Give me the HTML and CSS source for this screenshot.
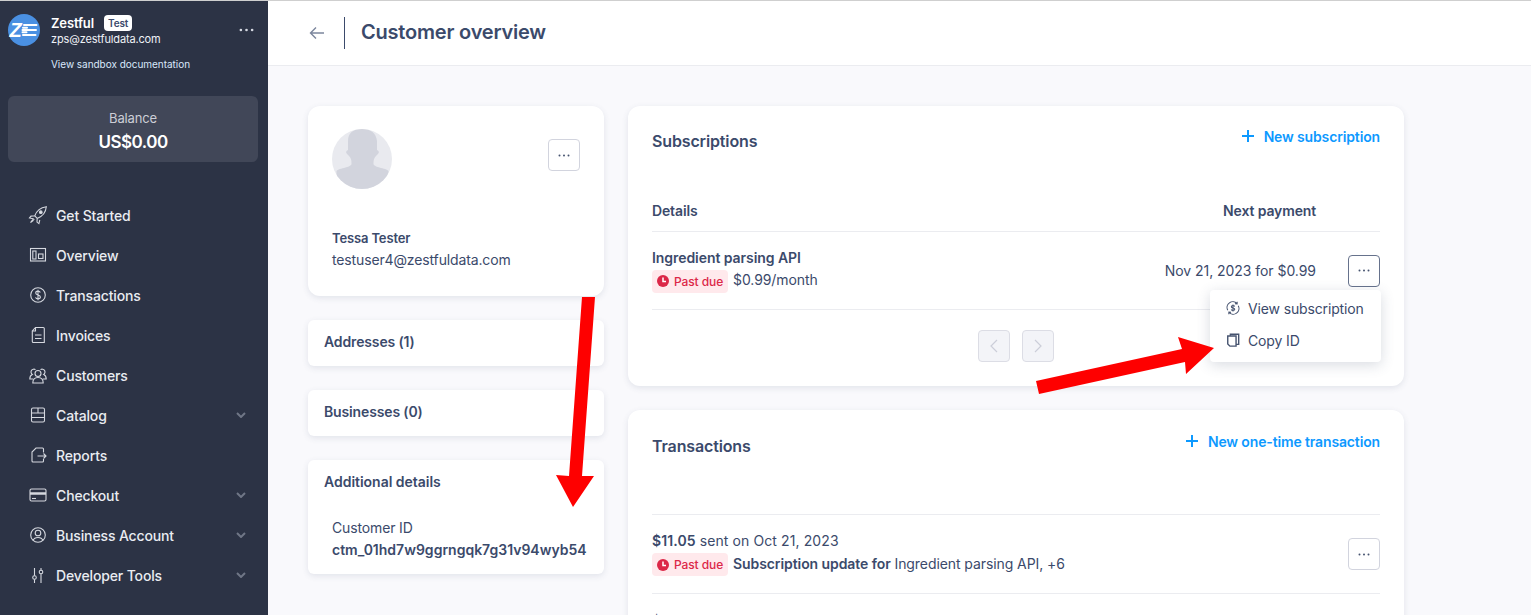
FILE: index.html
```html
<!DOCTYPE html>
<html lang="en">
<head>
  <meta charset="UTF-8" />
  <meta name="viewport" content="width=device-width, initial-scale=1.0" />
  <title>Customer overview</title>
  <link rel="stylesheet" href="styles.css">
</head>
<body>
  <aside class="sidebar">
    <div class="account">
      <svg class="logo" viewBox="0 0 32 32">
        <circle cx="16" cy="16" r="16" fill="#4a90e2"/>
        <text x="1.500" y="23" class="logo-z">Z</text>
        <path d="M16 11h12.500M15 13.800h4M14.500 16h13.500M14.500 18.300h4M15 21h12.500" stroke="#fff" stroke-width="2" fill="none" stroke-linecap="round"/>
      </svg>
      <div class="account-text">
        <div class="account-name">Zestful <span class="test-badge">Test</span></div>
        <div class="account-mail">zps@zestfuldata.com</div>
      </div>
      <svg class="account-dots" viewBox="0 0 16 4"><circle cx="2" cy="2" r="1.400"/><circle cx="8" cy="2" r="1.400"/><circle cx="14" cy="2" r="1.400"/></svg>
    </div>
    <div class="sandbox-link">View sandbox documentation</div>
    <div class="balance">
      <div class="balance-label">Balance</div>
      <div class="balance-value">US$0.00</div>
    </div>
    <nav class="nav">
      <div class="nav-item">
        <svg viewBox="0 0 20 20"><path d="M6.800 10.800C8.500 6 12.500 2.500 18.300 1.700c-.5 6-4.300 9.800-9.100 11.700zM6.800 10.800l-3.800.3L1.500 13l3.600.7M9.200 13.400l-.2 3.700 1.900 1.500.9-3.600M4.800 14.500l-2.300 3 3-2.200M5.100 13.700 6.300 14.900"/><circle cx="12.800" cy="7.200" r="1.300" fill="#e3e5ea"/></svg>
        <span>Get Started</span>
      </div>
      <div class="nav-item">
        <svg viewBox="0 0 20 20"><rect x="2.500" y="3.500" width="15" height="12.500"/><rect x="4.800" y="6" width="3.200" height="8"/><rect x="10.500" y="9" width="4.500" height="4.500"/></svg>
        <span>Overview</span>
      </div>
      <div class="nav-item">
        <svg viewBox="0 0 20 20"><circle cx="10" cy="10" r="7.300"/><path d="M12.300 7.500c-.4-1-1.200-1.400-2.300-1.400-1.300 0-2.300.7-2.300 1.900 0 2.700 4.700 1.300 4.700 4 0 1.200-1 1.900-2.400 1.900-1.200 0-2.100-.5-2.500-1.500M10 4.800v10.400"/></svg>
        <span>Transactions</span>
      </div>
      <div class="nav-item">
        <svg viewBox="0 0 20 20"><path d="M7.500 2.500h7.800a1 1 0 0 1 1 1v14h-11a1 1 0 0 1-1-1V6zM7.500 2.500V6H4.300M7 10h6.500M7 13.500h6.500"/></svg>
        <span>Invoices</span>
      </div>
      <div class="nav-item">
        <svg viewBox="0 0 20 20"><circle cx="10" cy="8.500" r="3"/><path d="M4.800 18c0-3.800 2-5.500 5.200-5.500s5.200 1.700 5.200 5.500zM7.500 4.600a2.800 2.800 0 1 0-3.200 4.800C2.800 10 1.800 11.600 1.800 14h3.300M12.500 4.600a2.800 2.800 0 1 1 3.200 4.800c1.500.6 2.500 2.200 2.500 4.600h-3.300"/></svg>
        <span>Customers</span>
      </div>
      <div class="nav-item">
        <svg viewBox="0 0 20 20"><rect x="3.500" y="3" width="13" height="14" rx="1.500"/><path d="M3.500 8h13M3.500 12.500h13M10 3v5"/></svg>
        <span>Catalog</span>
        <svg class="chevron" viewBox="0 0 10 6"><path d="M1 1l4 4 4-4"/></svg>
      </div>
      <div class="nav-item">
        <svg viewBox="0 0 20 20"><path d="M15.500 7.500V4a1 1 0 0 0-1-1H8L4 7v9a1 1 0 0 0 1 1h9.500a1 1 0 0 0 1-1v-2M9.500 11H18M15.500 8.500 18 11l-2.500 2.500"/></svg>
        <span>Reports</span>
      </div>
      <div class="nav-item">
        <svg viewBox="0 0 20 20"><rect x="2" y="4" width="16" height="12" rx="1.500"/><path d="M2 8.500h16" stroke-width="2.500"/><path d="M4 13.500h4"/></svg>
        <span>Checkout</span>
        <svg class="chevron" viewBox="0 0 10 6"><path d="M1 1l4 4 4-4"/></svg>
      </div>
      <div class="nav-item">
        <svg viewBox="0 0 20 20"><circle cx="10" cy="10" r="7.300"/><circle cx="10" cy="8" r="2.800"/><path d="M5 15.500c.8-2 2.500-3 5-3s4.200 1 5 3"/></svg>
        <span>Business Account</span>
        <svg class="chevron" viewBox="0 0 10 6"><path d="M1 1l4 4 4-4"/></svg>
      </div>
      <div class="nav-item">
        <svg viewBox="0 0 20 20"><circle cx="6.500" cy="12.500" r="1.800"/><circle cx="13" cy="7" r="1.800"/><path d="M6.500 3v7.700M6.500 14.300V18M13 3v2.200M13 8.800V18"/></svg>
        <span>Developer Tools</span>
        <svg class="chevron" viewBox="0 0 10 6"><path d="M1 1l4 4 4-4"/></svg>
      </div>
    </nav>
  </aside>

  <div class="page">
    <header class="topbar">
      <svg class="back" viewBox="0 0 16 14"><path d="M15 7H1.500M7 1.500 1.500 7 7 12.500"/></svg>
      <h1>Customer overview</h1>
    </header>

    <main class="content">
      <div class="col-left">
        <section class="card profile">
          <div class="profile-top">
            <svg class="avatar" viewBox="0 0 60 60">
              <circle cx="30" cy="30" r="30" fill="#e9eaef"/>
              <clipPath id="avatar-clip"><circle cx="30" cy="30" r="30"/></clipPath>
              <path clip-path="url(#avatar-clip)" fill="#d2d4dd" d="M30 0c-9 0-14 4-14 12v9c-2 .5-2.500 2.500-1 4 1 1.200 2.500 2 3.500 4 .8 1.700 1 3 1 6-.3 2-4 3-6 3.500-4 1-8 2-9 3.500v18h52V42c-1-1.500-5-2.500-9-3.500-2-.5-5.700-1.500-6-3.500 0-3 .2-4.300 1-6 1-2 2.500-2.800 3.500-4 1.500-1.500 1-3.500-1-4v-9C44 4 39 0 30 0z"/>
            </svg>
            <button class="more-btn">
              <svg viewBox="0 0 12 3"><circle cx="1.500" cy="1.500" r="1"/><circle cx="6" cy="1.500" r="1"/><circle cx="10.500" cy="1.500" r="1"/></svg>
            </button>
          </div>
          <div class="profile-name">Tessa Tester</div>
          <div class="profile-mail">testuser4@zestfuldata.com</div>
        </section>

        <section class="card small-card"><h3>Addresses (1)</h3></section>
        <section class="card small-card"><h3>Businesses (0)</h3></section>

        <section class="card small-card details">
          <h3>Additional details</h3>
          <div class="details-body">
            <div class="details-label">Customer ID</div>
            <div class="details-value">ctm_01hd7w9ggrngqk7g31v94wyb54</div>
          </div>
        </section>
      </div>

      <div class="col-right">
        <section class="card wide-card subs">
          <div class="card-head">
            <h2>Subscriptions</h2>
            <a class="add-link"><svg viewBox="0 0 12 12"><path d="M6 0v12M0 6h12"/></svg>New subscription</a>
          </div>
          <div class="table-head"><span>Details</span><span class="next-col">Next payment</span></div>
          <div class="sub-row">
            <div class="sub-info">
              <div class="sub-name">Ingredient parsing API</div>
              <div class="status-line">
                <span class="past-due">
                  <svg viewBox="0 0 12 12"><circle cx="6" cy="6" r="6" fill="#dc2848"/><path d="M6 2.500V6.500H9" stroke="#fff" stroke-width="1.500" fill="none"/></svg>
                  Past due
                </span>
                <span class="status-text">$0.99/month</span>
              </div>
            </div>
            <div class="sub-next">Nov 21, 2023 for $0.99</div>
            <button class="more-btn active">
              <svg viewBox="0 0 12 3"><circle cx="1.500" cy="1.500" r="1"/><circle cx="6" cy="1.500" r="1"/><circle cx="10.500" cy="1.500" r="1"/></svg>
            </button>
            <div class="menu">
              <div class="menu-item">
                <svg viewBox="0 0 16 16"><path d="M2 10.500A6.500 6.500 0 0 1 12.500 3M14 5.500A6.500 6.500 0 0 1 3.500 13M12.800 .8 12.700 3.300 10.200 3.200M3.200 15.200 3.300 12.700 5.800 12.800M10 6.300C9.600 5.600 9 5.200 8 5.200c-1.100 0-1.900.6-1.900 1.400C6.100 8.700 10 7.500 10 9.500c0 .9-.9 1.400-2 1.400s-1.700-.4-2.100-1.100M8 4v8"/></svg>
                View subscription
              </div>
              <div class="menu-item">
                <svg class="copy-icon" viewBox="0 0 16 16"><path d="M5 3V1.500h9.500v11.500h-3"/><path d="M2 3.500h9.500v11.500H4.500L2 12.500z"/></svg>
                Copy ID
              </div>
            </div>
          </div>
          <div class="pager">
            <button class="page-btn"><svg viewBox="0 0 8 14"><path d="M7 1 1 7l6 6"/></svg></button>
            <button class="page-btn"><svg viewBox="0 0 8 14"><path d="m1 1 6 6-6 6"/></svg></button>
          </div>
        </section>

        <section class="card wide-card trans">
          <div class="card-head">
            <h2>Transactions</h2>
            <a class="add-link"><svg viewBox="0 0 12 12"><path d="M6 0v12M0 6h12"/></svg>New one-time transaction</a>
          </div>
          <div class="trans-row">
            <div class="sub-info">
              <div class="trans-title"><b>$11.05</b> sent on Oct 21, 2023</div>
              <div class="status-line">
                <span class="past-due">
                  <svg viewBox="0 0 12 12"><circle cx="6" cy="6" r="6" fill="#dc2848"/><path d="M6 2.500V6.500H9" stroke="#fff" stroke-width="1.500" fill="none"/></svg>
                  Past due
                </span>
                <span class="status-text"><b>Subscription update for</b> Ingredient parsing API, +6</span>
              </div>
            </div>
            <button class="more-btn">
              <svg viewBox="0 0 12 3"><circle cx="1.500" cy="1.500" r="1"/><circle cx="6" cy="1.500" r="1"/><circle cx="10.500" cy="1.500" r="1"/></svg>
            </button>
          </div>
          <div class="trans-row">
            <div class="trans-title"><b>$11.05</b> sent on Sep 21, 2023</div>
          </div>
        </section>
      </div>
    </main>
  </div>

  <!-- red annotation arrows over the screenshot -->
  <svg class="arrows" viewBox="0 0 1531 615">
    <polygon fill="#fe0000" points="582,297 595,297 582,476 594,476 573,507 556,475 569,476"/>
    <polygon fill="#fe0000" points="1036,381 1182,349 1178,337 1214,348 1186,374 1185,362 1039,394"/>
  </svg>
</body>
</html>
```

FILE: styles.css
```css
* {
  box-sizing: border-box;
}

html, body {
  height: 100%;
}

body {
  margin: 0;
  display: flex;
  height: 100vh;
  overflow: hidden;
  border-top: 1px solid #cfcfcf;
  font-family: Inter, "Noto Sans", sans-serif;
  font-size: 14px;
  letter-spacing: -0.14px;
  color: #3b4a6b;
  background: #f9f9fc;
}

/* sidebar */
.sidebar {
  width: 268px;
  flex: none;
  background: #2c3345;
  color: #fff;
  padding: 13px 0 0;
}

.account {
  display: flex;
  align-items: flex-start;
  padding: 0 14px 0 8px;
}

.logo {
  width: 32px;
  height: 32px;
  flex: none;
}

.logo-z {
  font-family: "Liberation Sans", sans-serif;
  font-weight: 700;
  font-style: italic;
  font-size: 20px;
  fill: #fff;
}

.account-text {
  margin-left: 11px;
  flex: 1;
}

.account-name {
  display: flex;
  align-items: center;
  gap: 10px;
  height: 18px;
  font-size: 13px;
  font-weight: 600;
}

.test-badge {
  background: #fff;
  color: #3b4a6b;
  border-radius: 4px;
  font-size: 10px;
  font-weight: 600;
  line-height: 16px;
  padding: 0 4px;
}

.account-mail {
  font-size: 11px;
  line-height: 13px;
  margin-top: 1px;
  letter-spacing: -0.15px;
  color: #eef1f6;
}

.account-dots {
  width: 15px;
  height: 4px;
  margin-top: 14px;
  fill: #d5d9e2;
}

.sandbox-link {
  margin: 11px 0 0 51px;
  font-size: 10px;
  line-height: 14px;
  letter-spacing: -0.03px;
  color: #d9e8fb;
}

.balance {
  margin: 25px 10px 0 8px;
  height: 66px;
  background: #414758;
  border-radius: 6px;
  text-align: center;
  padding-top: 13px;
}

.balance-label {
  font-size: 13px;
  line-height: 18px;
  color: #ccced6;
}

.balance-value {
  font-size: 17px;
  line-height: 22px;
  font-weight: 600;
  margin-top: 4px;
  letter-spacing: -0.5px;
}

.nav {
  margin-top: 33px;
}

.nav-item {
  display: flex;
  align-items: center;
  height: 40px;
  padding: 0 22px 0 28px;
  font-weight: 500;
  color: #e9ecf1;
}

.nav-item svg {
  width: 20px;
  height: 20px;
  margin-right: 8px;
  flex: none;
  fill: none;
  stroke: #d5d8df;
  stroke-width: 1.100;
}

.nav-item span {
  flex: 1;
}

.nav-item .chevron {
  width: 10px;
  height: 6px;
  margin: 0;
  stroke: #6f7686;
  stroke-width: 2;
}

/* page */
.page {
  flex: 1;
  min-width: 0;
}

.topbar {
  display: flex;
  align-items: center;
  height: 65px;
  padding-left: 41px;
  background: #fff;
  border-bottom: 1px solid #ebecf0;
}

.back {
  width: 16px;
  height: 14px;
  fill: none;
  stroke: #7c869d;
  stroke-width: 1.400;
}

.topbar h1 {
  margin: 0 0 0 19px;
  padding-left: 16px;
  border-left: 1px solid #3b4a6b;
  height: 32px;
  line-height: 31px;
  font-size: 20px;
  font-weight: 600;
  letter-spacing: -0.2px;
  color: #3b4a6b;
}

.content {
  display: flex;
  gap: 24px;
  padding: 40px 0 0 40px;
  align-items: flex-start;
}

.col-left {
  width: 296px;
  display: flex;
  flex-direction: column;
  gap: 24px;
}

.col-right {
  width: 776px;
  display: flex;
  flex-direction: column;
  gap: 24px;
}

.card {
  background: #fff;
  border-radius: 6px;
  box-shadow: 0 2px 6px rgba(61, 74, 104, 0.12);
}

.profile {
  height: 190px;
  border-radius: 12px;
  padding: 23px 24px 0;
}

.profile-top {
  display: flex;
  justify-content: space-between;
  height: 60px;
  margin-bottom: 39px;
}

.avatar {
  width: 60px;
  height: 60px;
}

.more-btn {
  width: 32px;
  height: 32px;
  flex: none;
  padding: 0;
  display: flex;
  align-items: center;
  justify-content: center;
  background: #fff;
  border: 1px solid #d2d4de;
  border-radius: 4px;
}

.profile .more-btn {
  margin-top: 10px;
}

.more-btn svg {
  width: 12px;
  height: 3px;
  fill: #46536f;
}

.more-btn.active {
  border-color: #66728c;
}

.profile-name {
  font-size: 13px;
  font-weight: 600;
  line-height: 20px;
}

.profile-mail {
  line-height: 20px;
  margin-top: 2px;
}

.small-card {
  height: 46px;
  padding: 13px 16px 0;
}

.small-card h3 {
  margin: 0;
  font-size: 14px;
  line-height: 18px;
  font-weight: 600;
}

.details {
  height: 114px;
}

.details h3 {
  letter-spacing: -0.02px;
}

.details-body {
  padding: 27px 0 0 8px;
  white-space: nowrap;
}

.details-label {
  line-height: 20px;
}

.details-value {
  line-height: 20px;
  margin-top: 2px;
  font-weight: 600;
  letter-spacing: 0;
}

/* right column */
.wide-card {
  border-radius: 12px;
  padding: 0 24px;
}

.card-head {
  display: flex;
  justify-content: space-between;
  height: 47px;
  padding-top: 21px;
}

.card-head h2 {
  margin: 3px 0 0;
  font-size: 16px;
  line-height: 22px;
  font-weight: 600;
}

.add-link {
  display: flex;
  align-items: center;
  height: 18px;
  font-weight: 600;
  color: #0d99ff;
}

.add-link svg {
  width: 12px;
  height: 12px;
  margin-right: 10px;
  fill: none;
  stroke: #0d99ff;
  stroke-width: 2;
}

.subs {
  height: 280px;
}

.table-head {
  display: flex;
  justify-content: space-between;
  align-items: center;
  height: 79px;
  padding-top: 37px;
  border-bottom: 1px solid #ebecf0;
  font-weight: 600;
}

.next-col {
  margin-right: 64px;
}

.sub-row {
  position: relative;
  display: flex;
  align-items: center;
  height: 78px;
  border-bottom: 1px solid #ebecf0;
}

.sub-info {
  flex: 1;
}

.sub-name {
  font-size: 14px;
  font-weight: 600;
  line-height: 18px;
  letter-spacing: -0.06px;
}

.sub-next {
  margin-right: 32px;
  letter-spacing: -0.05px;
}

.status-line {
  display: flex;
  align-items: center;
  gap: 5px;
  margin-top: 3px;
}

.status-text {
  margin-top: -3px;
  letter-spacing: -0.08px;
}

.status-line b {
  font-weight: 600;
}

.past-due {
  display: inline-flex;
  align-items: center;
  gap: 5px;
  height: 23px;
  width: 76px;
  padding-left: 5px;
  background: #ffe9ec;
  border-radius: 4px;
  font-size: 12px;
  font-weight: 500;
  letter-spacing: -0.1px;
  color: #dc2848;
  white-space: nowrap;
}

.past-due svg {
  width: 12px;
  height: 12px;
  flex: none;
}

.menu {
  position: absolute;
  z-index: 2;
  top: 58px;
  right: -1px;
  width: 171px;
  height: 72px;
  padding-top: 3px;
  background: #fff;
  border-radius: 4px;
  box-shadow: 0 3px 14px rgba(61, 74, 104, 0.2);
}

.menu-item {
  display: flex;
  align-items: center;
  height: 32px;
  margin-top: -1px;
  padding-left: 16px;
  white-space: nowrap;
}

.menu-item + .menu-item {
  margin-top: 0;
}

.menu-item svg {
  width: 14px;
  height: 14px;
  margin-right: 8px;
  fill: none;
  stroke: #46536f;
  stroke-width: 1.200;
}

.menu-item .copy-icon {
  stroke-width: 1.600;
}

.pager {
  display: flex;
  gap: 12px;
  padding: 20px 0 0 326px;
}

.page-btn {
  width: 32px;
  height: 32px;
  padding: 0;
  display: flex;
  align-items: center;
  justify-content: center;
  background: #f3f4f8;
  border: 1px solid #dcdde5;
  border-radius: 4px;
}

.page-btn svg {
  width: 10px;
  height: 14px;
  fill: none;
  stroke: #ccced9;
  stroke-width: 1.200;
}

.trans {
  height: 300px;
}

.trans .card-head {
  height: 105px;
  border-bottom: 1px solid #ebecf0;
}

.trans .card-head h2 {
  margin-top: 4px;
}

.trans .add-link {
  margin-top: 1px;
}

.trans-row {
  display: flex;
  align-items: center;
  height: 79px;
  border-bottom: 1px solid #ebecf0;
}

.trans-row + .trans-row {
  align-items: flex-start;
  padding-top: 18px;
}

.trans-title {
  line-height: 18px;
  letter-spacing: 0.1px;
}

.trans-title b {
  font-weight: 600;
}

.arrows {
  position: absolute;
  z-index: 5;
  top: 0;
  left: 0;
  width: 1531px;
  height: 615px;
  pointer-events: none;
}
```
